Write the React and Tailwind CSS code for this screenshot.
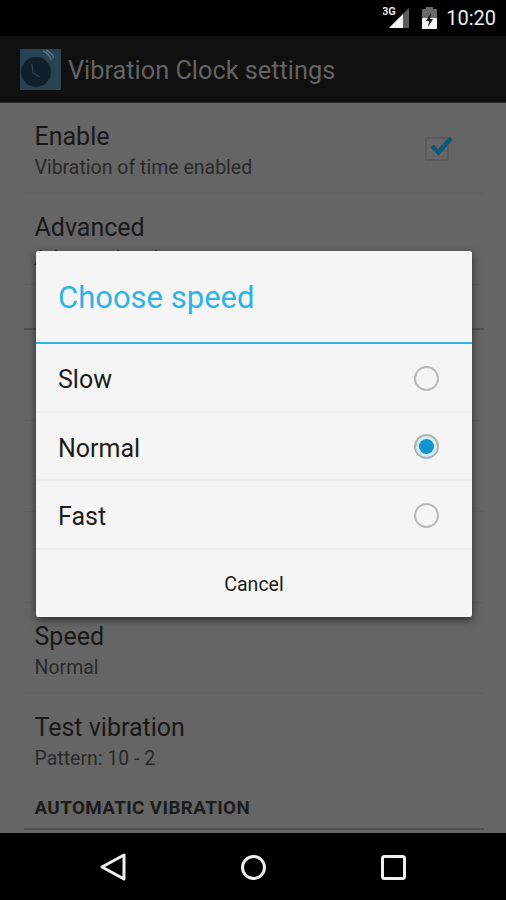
import React from 'react';

function Row({ title, summary, children, last }) {
  return (
    <div className={`h-[91px] ml-6 mr-[22px] pl-[10.5px] pr-[35px] pt-[17px] flex items-start justify-between ${last ? '' : 'border-b border-[#5f5f5f]'}`}>
      <div className="flex flex-col">
        <span className="text-[25px] leading-[34px] text-[#191919]">{title}</span>
        <span className="text-[19.5px] leading-[26px] mt-[1px] text-[#2a2a2a] h-[26px]">{summary}</span>
      </div>
      {children}
    </div>
  );
}

function Section({ title }) {
  return (
    <div className="h-[45px] ml-6 mr-[22px] pl-[10.5px] flex items-end pb-[9px] border-b-2 border-[#4f4f4f]">
      <span className="text-[18.8px] leading-[22px] tracking-[0.4px] font-bold text-[#1c1c1c]">{title}</span>
    </div>
  );
}

function Option({ label, checked }) {
  return (
    <div className="h-[68.5px] pt-[2px] pl-[22px] pr-[33px] flex items-center justify-between border-b-2 border-[#eeeeee]">
      <span className="text-[25px] leading-[34px] mt-[4px] text-[#1c1c1c]">{label}</span>
      {checked ? (
        <span className="w-[25px] h-[25px] rounded-full border-2 border-[#a9b4b8] bg-[#d8edf5] flex items-center justify-center">
          <span className="w-[15px] h-[15px] rounded-full bg-[#1594d2]" />
        </span>
      ) : (
        <span className="w-[25px] h-[25px] rounded-full border-2 border-[#b9b9b9]" />
      )}
    </div>
  );
}

export default function App() {
  return (
    <div className="relative w-[506px] h-[900px] overflow-hidden bg-[#656565] flex flex-col font-['Roboto',sans-serif]">
      {/* status bar */}
      <div className="h-[36px] bg-black flex items-center justify-end pr-[10px] shrink-0">
        <svg width="30" height="24" viewBox="0 0 30 24" className="mr-[9px]">
          <polygon points="26,2 26,22 6,22" fill="#5c5c5c" />
          <polygon points="20,8 20,22 6,22" fill="#f2f2f2" />
          <text x="-1" y="9" fontSize="11" fontWeight="700" fill="#e8e8e8" fontFamily="Roboto">3G</text>
        </svg>
        <svg width="15" height="22" viewBox="0 0 15 22" className="mr-[9px]">
          <rect x="4" y="0" width="7" height="3" fill="#6a6a6a" />
          <rect x="0" y="2" width="15" height="20" rx="1" fill="#6a6a6a" />
          <rect x="0" y="11" width="15" height="11" rx="1" fill="#f4f4f4" />
          <polygon points="9,6 4,14 7,14 6,20 11,12 8,12" fill="#111111" />
        </svg>
        <span className="text-[20px] leading-[24px] text-[#ededed]">10:20</span>
      </div>

      {/* action bar */}
      <div className="h-[67px] bg-[#101010] border-b border-[#2a2a2a] flex items-center pl-[20px] shrink-0">
        <svg width="41" height="41" viewBox="0 0 41 41" className="mr-[7px]">
          <rect width="41" height="41" fill="#274252" />
          <circle cx="16" cy="23" r="15" fill="#10202b" />
          <path d="M12 15 L13 24 L20 28" stroke="#2b4656" strokeWidth="1.2" fill="none" />
          <path d="M23 2 A13 13 0 0 1 31 11" stroke="#587482" strokeWidth="1.5" fill="none" />
          <path d="M26 1 A16 16 0 0 1 34 9" stroke="#587482" strokeWidth="1.5" fill="none" />
        </svg>
        <span className="text-[25.3px] leading-[34px] mt-[4px] text-[#636363]">Vibration Clock settings</span>
      </div>

      {/* settings list behind the dialog */}
      <div className="flex-1 min-h-0 overflow-hidden">
        <Row title="Enable" summary="Vibration of time enabled">
          <span className="relative mt-[17px] w-[24px] h-[24px] border-2 border-[#5a5a5a] rounded-[2px] bg-[#666666]">
            <svg width="26" height="24" viewBox="0 0 26 24" className="absolute left-[2px] top-[-4px]">
              <path d="M3 11 L9.5 17.5 L22 3" fill="none" stroke="#0b5a7a" strokeWidth="4.5" />
            </svg>
          </span>
        </Row>
        <Row title="Advanced" summary="Advanced options" />
        <Section title="" />
        <Row title="" summary="" />
        <Row title="" summary="" />
        <Row title="" summary="" />
        <Row title="Speed" summary="Normal" />
        <Row title="Test vibration" summary="Pattern: 10 - 2" last />
        <Section title="AUTOMATIC VIBRATION" />
      </div>

      {/* nav bar */}
      <div className="h-[67px] bg-black flex items-center justify-center gap-[104px] shrink-0">
        <svg width="36" height="36" viewBox="0 0 36 36">
          <polygon points="29,6 29,30 7,18" fill="none" stroke="#f0f0f0" strokeWidth="3" strokeLinejoin="round" />
        </svg>
        <svg width="36" height="36" viewBox="0 0 36 36">
          <circle cx="18.5" cy="18.5" r="11" fill="none" stroke="#f0f0f0" strokeWidth="3" />
        </svg>
        <svg width="36" height="36" viewBox="0 0 36 36">
          <rect x="7.5" y="7.5" width="22" height="22" rx="2" fill="none" stroke="#f0f0f0" strokeWidth="3" />
        </svg>
      </div>

      {/* dialog */}
      <div className="absolute left-[36px] top-[251px] w-[436px] h-[366px] bg-[#f5f5f5] rounded-[2px] shadow-[0_3px_8px_rgba(0,0,0,0.55)] flex flex-col">
        <div className="h-[93px] flex items-center pl-[22px] border-b-2 border-[#2fb3e3] shrink-0">
          <span className="text-[31px] leading-[40px] mt-[3px] text-[#2fb3e3]">Choose speed</span>
        </div>
        <Option label="Slow" />
        <Option label="Normal" checked />
        <Option label="Fast" />
        <div className="flex-1 flex items-center justify-center">
          <span className="text-[19.5px] leading-[24px] mt-[4px] text-[#1c1c1c]">Cancel</span>
        </div>
      </div>
    </div>
  );
}
